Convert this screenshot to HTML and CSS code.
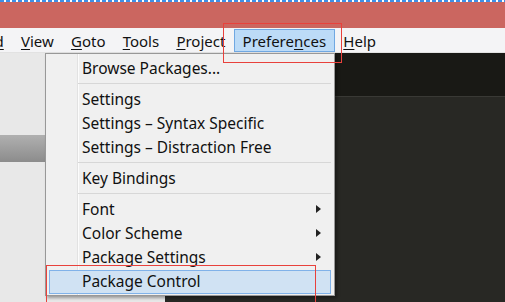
FILE: index.html
```html
<!DOCTYPE html>
<html lang="en">

<head>
    <meta charset="UTF-8">
    <meta name="viewport" content="width=device-width, initial-scale=1.0">
    <title>Preferences menu</title>
    <link rel="stylesheet" href="styles.css">
</head>

<body>
    <div class="focus-line"></div>
    <div class="titlebar"></div>

    <nav class="menubar">
        <span class="menu-item first">Fin<u>d</u></span>
        <span class="menu-item"><u>V</u>iew</span>
        <span class="menu-item"><u>G</u>oto</span>
        <span class="menu-item"><u>T</u>ools</span>
        <span class="menu-item"><u>P</u>roject</span>
        <span class="menu-item active">Prefere<u>n</u>ces</span>
        <span class="menu-item"><u>H</u>elp</span>
    </nav>

    <div class="workspace">
        <aside class="sidebar">
            <div class="sidebar-band"></div>
        </aside>
        <main class="editor">
            <div class="tabbar"></div>
            <div class="editor-body"></div>
        </main>
    </div>

    <ul class="dropdown">
        <li class="item">Browse Packages...</li>
        <li class="separator"></li>
        <li class="item">Settings</li>
        <li class="item">Settings – Syntax Specific</li>
        <li class="item">Settings – Distraction Free</li>
        <li class="separator"></li>
        <li class="item">Key Bindings</li>
        <li class="separator"></li>
        <li class="item submenu">Font</li>
        <li class="item submenu">Color Scheme</li>
        <li class="item submenu">Package Settings</li>
        <li class="item hover">Package Control</li>
    </ul>

    <!-- red annotation boxes -->
    <div class="mark mark-prefs"></div>
    <div class="mark mark-control"></div>
</body>

</html>
```

FILE: styles.css
```css
html {
    overflow: hidden;
}

body {
    margin: 0;
    width: 505px;
    height: 302px;
    overflow: hidden;
    position: relative;
    font-family: "Noto Sans", "Open Sans", sans-serif;
    font-size: 15px;
    color: #111;
    background-color: #282824;
}

.focus-line {
    height: 2px;
    background: repeating-linear-gradient(90deg, #3d8fe6 0 4px, #ffffff 4px 6px);
}

.titlebar {
    height: 26px;
    background-color: #cb6660;
}

.menubar {
    height: 25px;
    display: flex;
    background-color: #f4f4f6;
    border-bottom: 1px solid #e2e2e2;
    box-sizing: border-box;
    white-space: nowrap;
    overflow: hidden;
}

.menu-item {
    height: 23px;
    margin-top: 1px;
    padding: 0 7.6px;
    line-height: 22px;
    border: 1px solid transparent;
    box-sizing: border-box;
}

.menu-item.first {
    margin-left: -35px;
}

.menu-item u {
    text-underline-offset: 2px;
}

.menu-item.active {
    background-color: #bcdbf7;
    border-color: #70a8e2;
}

.workspace {
    display: flex;
    height: 249px;
}

.sidebar {
    width: 165px;
    background-color: #e8e8e8;
}

.sidebar-band {
    margin-top: 82px;
    height: 27px;
    background: linear-gradient(#b0b0b0, #8c8c8c);
}

.editor {
    flex: 1;
    display: flex;
    flex-direction: column;
}

.tabbar {
    height: 43px;
    background-color: #191915;
}

.editor-body {
    flex: 1;
    border-top: 1px solid #393935;
    background-color: #282824;
}

.dropdown {
    position: absolute;
    left: 45px;
    top: 53px;
    width: 290px;
    margin: 0;
    padding: 3px 3px 1px 3px;
    list-style: none;
    box-sizing: border-box;
    border: 1px solid #989898;
    background-color: #f0f0f0;
    background-image: linear-gradient(90deg, transparent 31px, #e2e2e2 31px, #e2e2e2 32px, #fcfcfc 32px, #fcfcfc 33px, transparent 33px);
    box-shadow: 2px 2px 3px rgba(0, 0, 0, 0.35);
    font-size: 15.5px;
}

.item {
    position: relative;
    height: 24px;
    line-height: 22px;
    padding-left: 33px;
    box-sizing: border-box;
    white-space: nowrap;
}

.item.submenu::after {
    content: "";
    position: absolute;
    right: 10px;
    top: 7px;
    border-left: 5px solid #222;
    border-top: 4.5px solid transparent;
    border-bottom: 4.5px solid transparent;
}

.item.hover {
    background-color: #d0e2f3;
    border: 1px solid #80b2e9;
    padding-left: 32px;
    line-height: 21px;
}

.separator {
    height: 1px;
    margin: 2px 0 4px 29px;
    background-color: #d7d7d7;
}

.mark {
    position: absolute;
    border: 1px solid #e8413c;
}

.mark-prefs {
    left: 223px;
    top: 23px;
    width: 117px;
    height: 38px;
}

.mark-control {
    left: 46px;
    top: 265px;
    width: 268px;
    height: 36px;
    border-bottom: none;
}
```
